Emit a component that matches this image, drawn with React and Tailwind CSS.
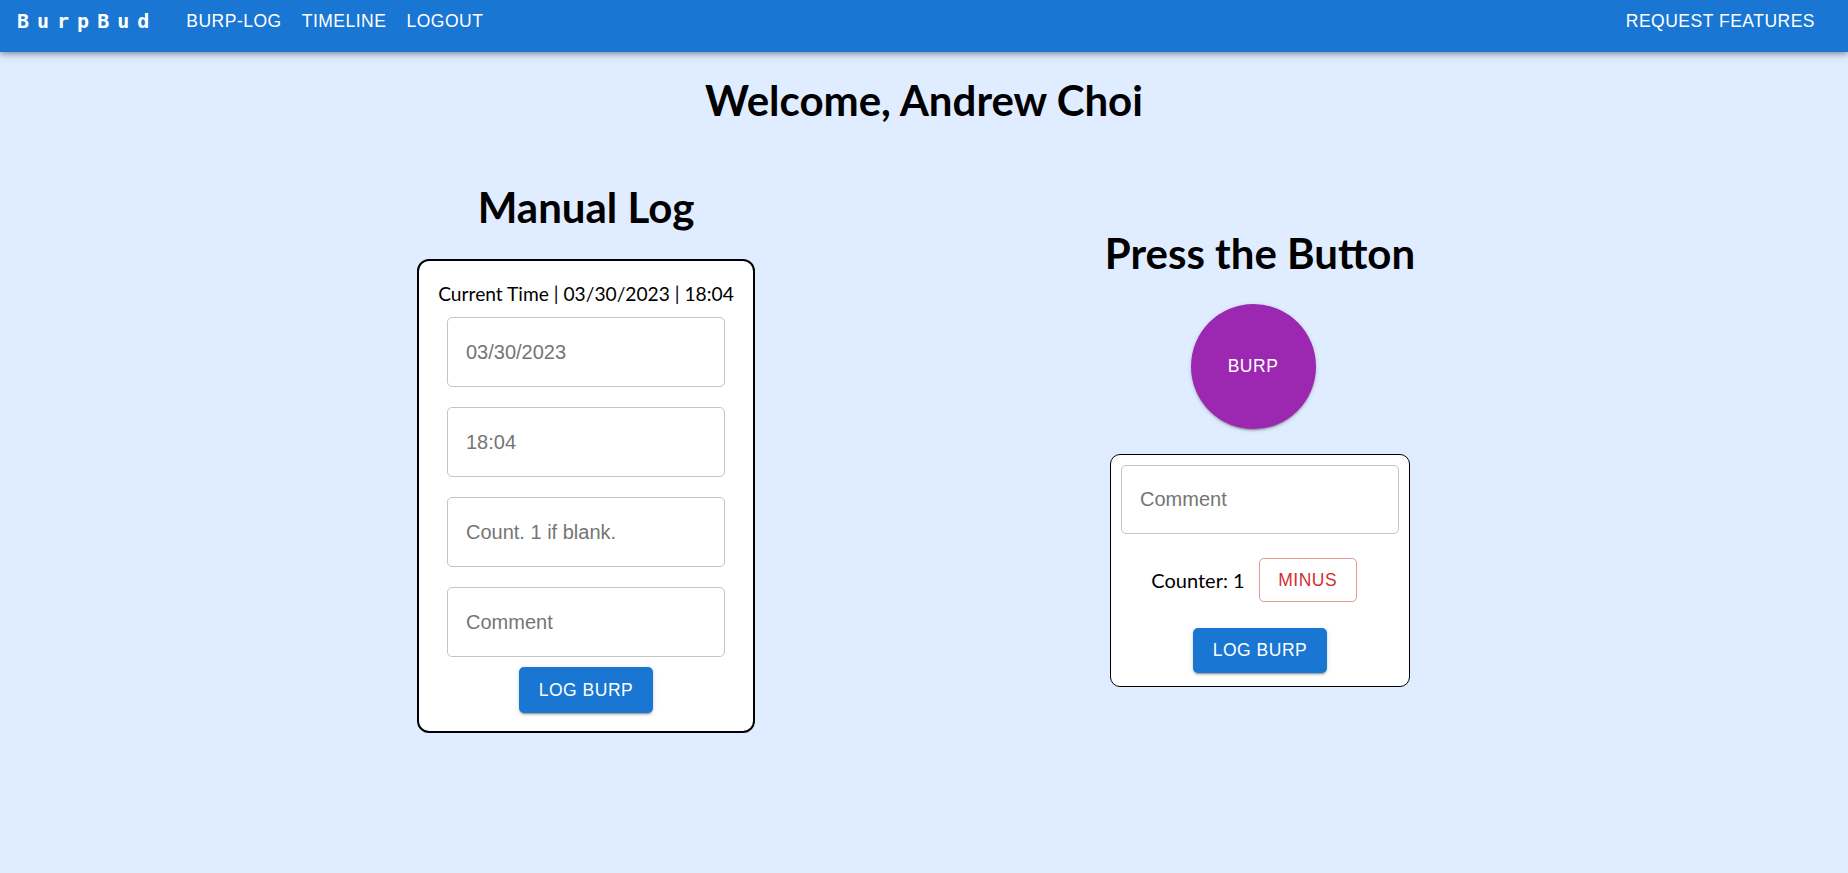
import React, { useState } from 'react';

const headFont = "font-['Lato','Noto_Sans',sans-serif]";
const muiFont = "font-['Liberation_Sans','Arial',sans-serif]";

const NavButton = ({ children }) => (
    <button className={`${muiFont} px-[10px] text-[17.5px] tracking-[0.5px] uppercase text-white leading-[24px]`}>
        {children}
    </button>
);

const Field = ({ placeholder, className = '' }) => (
    <input
        type="text"
        placeholder={placeholder}
        className={`${muiFont} w-[278px] bg-white border border-[#c4c4c4] rounded-[5px] pl-[18px] text-[20px] text-black placeholder:text-[#757575] outline-none ${className}`}
    />
);

const LogButton = ({ className = '' }) => (
    <button
        className={`${muiFont} w-[134px] bg-[#1976d2] text-white text-[17.5px] tracking-[0.5px] uppercase rounded-[5px] shadow-[0_3px_1px_-2px_rgba(0,0,0,0.2),0_2px_2px_0_rgba(0,0,0,0.14),0_1px_5px_0_rgba(0,0,0,0.12)] ${className}`}
    >
        Log Burp
    </button>
);

const App = () => {
    const [count, setCount] = useState(1);

    return (
        <div className="min-h-screen bg-[#e0ecff]">
            {/* App bar */}
            <header className="relative z-10 h-[52px] bg-[#1976d2] shadow-[0_2px_4px_-1px_rgba(0,0,0,0.2),0_4px_5px_0_rgba(0,0,0,0.14),0_1px_10px_0_rgba(0,0,0,0.12)]">
                <div className="h-[41px] flex items-center pl-[17px] pr-[23px]">
                    <span className="font-['DejaVu_Sans_Mono',monospace] font-bold text-[20px] tracking-[8px] text-white mr-[19px]">
                        BurpBud
                    </span>
                    <NavButton>Burp-Log</NavButton>
                    <NavButton>Timeline</NavButton>
                    <NavButton>Logout</NavButton>
                    <div className="flex-1" />
                    <NavButton>Request Features</NavButton>
                </div>
            </header>

            <main className={`${headFont} flex flex-col items-center text-black`}>
                <h1 className="mt-[23px] text-[42px] leading-[50px] font-bold whitespace-nowrap">
                    Welcome, Andrew Choi
                </h1>

                <div className="mt-[57px] flex items-center justify-center gap-[352px] pr-[18px]">
                    {/* Manual log */}
                    <div className="w-[338px] flex flex-col items-center">
                        <h2 className="text-[42px] leading-[50px] font-bold whitespace-nowrap">Manual Log</h2>
                        <div className="mt-[27px] w-[338px] bg-white border-2 border-black rounded-[12px] flex flex-col items-center pt-[21px] pb-[18px]">
                            <p className="text-[19.2px] leading-[24px] whitespace-nowrap">
                                Current Time | 03/30/2023 | 18:04
                            </p>
                            <div className="mt-[11px] flex flex-col gap-[20px]">
                                <Field placeholder="03/30/2023" className="h-[70px]" />
                                <Field placeholder="18:04" className="h-[70px]" />
                                <Field placeholder="Count. 1 if blank." className="h-[70px]" />
                                <Field placeholder="Comment" className="h-[70px]" />
                            </div>
                            <LogButton className="mt-[10px] h-[46px]" />
                        </div>
                    </div>

                    {/* Press the button */}
                    <div className="w-[306px] flex flex-col items-center">
                        <h2 className="text-[42px] leading-[50px] font-bold whitespace-nowrap">Press the Button</h2>
                        <button
                            onClick={() => setCount(count + 1)}
                            className={`${muiFont} mt-[26px] mr-[14px] w-[125px] h-[125px] rounded-full bg-[#9c27b0] text-white text-[17.5px] tracking-[0.5px] uppercase shadow-[0_3px_1px_-2px_rgba(0,0,0,0.2),0_2px_2px_0_rgba(0,0,0,0.14),0_1px_5px_0_rgba(0,0,0,0.12)]`}
                        >
                            Burp
                        </button>
                        <div className="mt-[25px] w-[300px] bg-white border border-black rounded-[10px] flex flex-col items-center p-[10px] pb-[13px]">
                            <Field placeholder="Comment" className="h-[69px]" />
                            <div className="mt-[24px] mr-[12px] flex items-center gap-[14px]">
                                <span className="text-[20px] leading-[24px]">Counter: {count}</span>
                                <button
                                    onClick={() => setCount(Math.max(1, count - 1))}
                                    className={`${muiFont} w-[98px] h-[44px] border border-[rgba(211,47,47,0.5)] rounded-[5px] text-[#d32f2f] text-[17.5px] tracking-[0.5px] uppercase`}
                                >
                                    Minus
                                </button>
                            </div>
                            <LogButton className="mt-[26px] h-[45px]" />
                        </div>
                    </div>
                </div>
            </main>
        </div>
    );
};

export default App;
